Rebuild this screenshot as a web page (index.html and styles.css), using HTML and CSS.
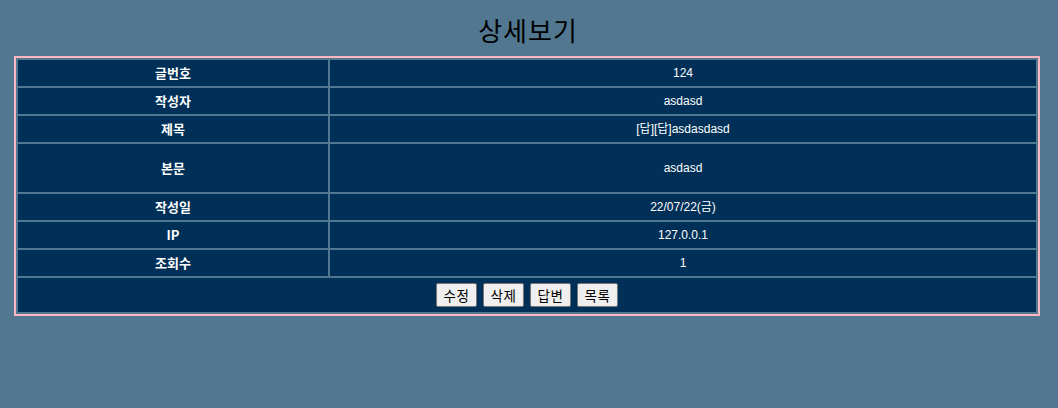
FILE: index.html
```html
<!DOCTYPE html>
<html lang="ko">
<head>
<meta charset="utf-8">
<title>상세보기</title>
<link rel="stylesheet" href="styles.css">
</head>
<body>
<h2 class="title">상세보기</h2>
<table class="detail">
  <tr><th class="label">글번호</th><td class="value">124</td></tr>
  <tr><th class="label">작성자</th><td class="value">asdasd</td></tr>
  <tr><th class="label">제목</th><td class="value">[답][답]asdasdasd</td></tr>
  <tr class="tall"><th class="label">본문</th><td class="value">asdasd</td></tr>
  <tr><th class="label">작성일</th><td class="value">22/07/22(금)</td></tr>
  <tr><th class="label">IP</th><td class="value">127.0.0.1</td></tr>
  <tr><th class="label">조회수</th><td class="value">1</td></tr>
  <tr class="actions-row">
    <td class="actions" colspan="2">
      <div class="buttons">
        <button class="btn">수정</button>
        <button class="btn">삭제</button>
        <button class="btn">답변</button>
        <button class="btn">목록</button>
      </div>
    </td>
  </tr>
</table>
</body>
</html>
```

FILE: styles.css
```css
html, body {
  margin: 0;
  padding: 0;
  background: #527891;
  font-family: "Noto Sans CJK KR", "Noto Sans", sans-serif;
}

.title {
  margin: 0;
  padding-top: 11px;
  height: 37px;
  line-height: 37px;
  text-align: center;
  font-size: 26px;
  font-weight: normal;
  letter-spacing: 1px;
  color: #000;
  position: relative;
  left: -1px;
}

.detail {
  margin: 8px 0 0 14px;
  width: 1026px;
  border: 2px solid #ffb6c1;
  border-spacing: 2px;
  background: #527891;
  table-layout: fixed;
}

.detail th,
.detail td {
  background: #002f57;
  color: #fff;
  height: 26px;
  padding: 0;
  text-align: center;
  vertical-align: middle;
  line-height: 16px;
}

.label {
  width: 310px;
  font-weight: bold;
  font-size: 13px;
  font-family: "Noto Sans CJK KR", sans-serif;
}

.value {
  font-size: 12px;
  font-family: "Liberation Sans", "Noto Sans CJK KR", sans-serif;
}

.tall th,
.tall td {
  height: 48px;
}

.actions-row td {
  height: 34px;
}

.buttons {
  display: flex;
  justify-content: center;
  gap: 6px;
}

.btn {
  width: 41px;
  height: 24px;
  padding: 0;
  margin: 0;
  border: 1px solid #767676;
  border-radius: 2px;
  background: #efefef;
  color: #000;
  font-family: "Noto Sans CJK KR", sans-serif;
  font-size: 13.5px;
  letter-spacing: 0.5px;
  line-height: 20px;
}
```
